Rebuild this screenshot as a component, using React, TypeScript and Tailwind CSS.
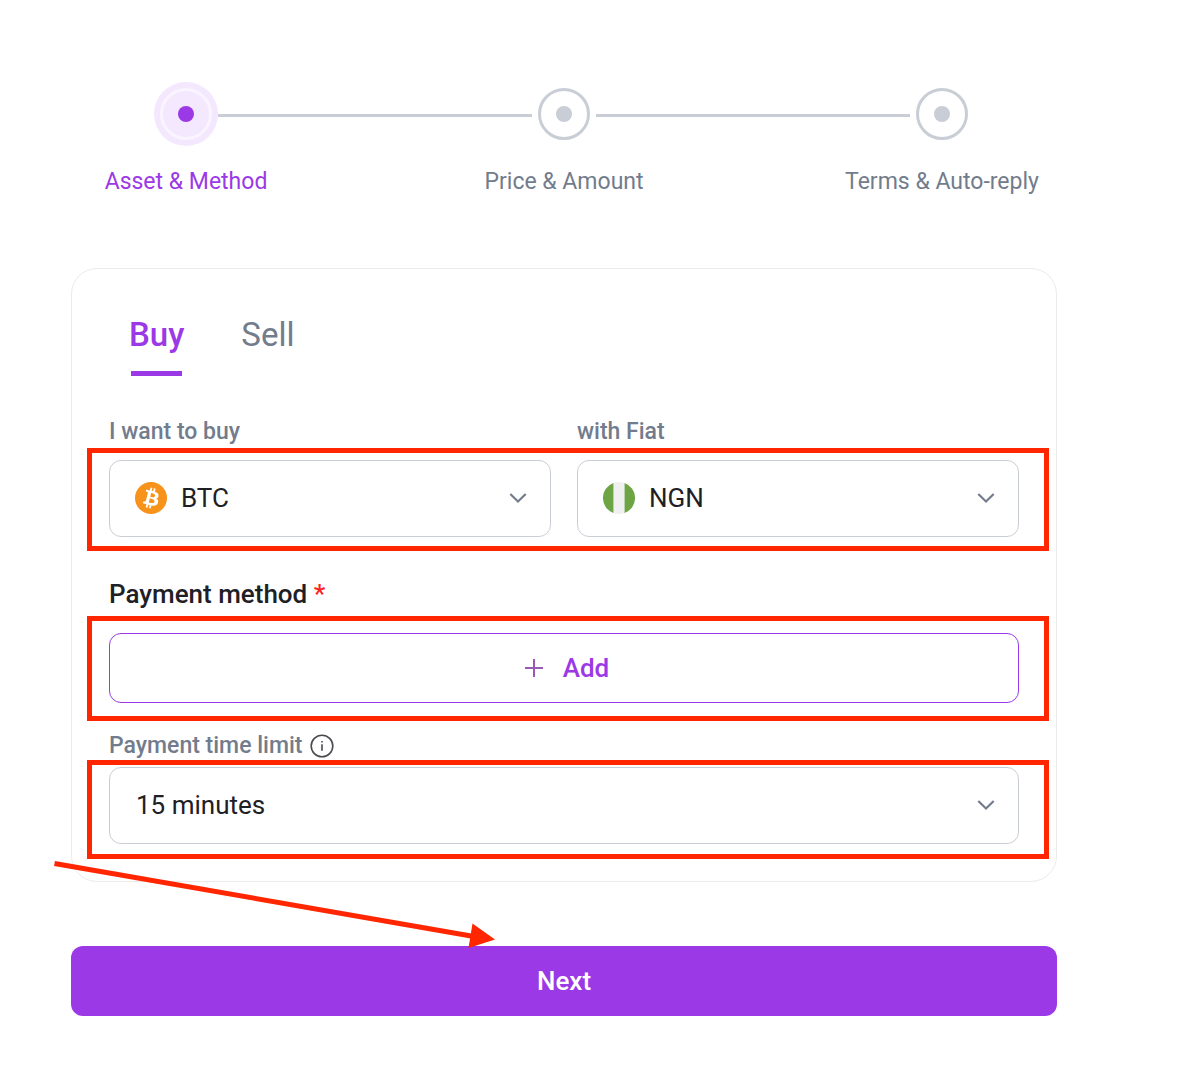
import type { ReactNode } from 'react';

const steps = ['Asset & Method', 'Price & Amount', 'Terms & Auto-reply'];

function Step({ label, active }: { label: string; active: boolean }) {
  return (
    <li className="flex w-16 flex-col items-center gap-5" aria-current={active ? 'step' : undefined}>
      <span
        className={
          active
            ? 'flex size-16 items-center justify-center rounded-full bg-[#f3e8fe]'
            : 'flex size-16 items-center justify-center rounded-full'
        }
      >
        <span
          className={
            active
              ? 'flex size-13 items-center justify-center rounded-full border-3 border-[#faf4ff]'
              : 'flex size-13 items-center justify-center rounded-full border-3 border-[#c9ced6]'
          }
        >
          <span className={active ? 'size-4 rounded-full bg-[#9b39e6]' : 'size-4 rounded-full bg-[#c9ced6]'} />
        </span>
      </span>
      <span
        className={
          active
            ? 'text-[23px] leading-8 whitespace-nowrap text-[#9b39e6]'
            : 'text-[23px] leading-8 whitespace-nowrap text-[#727c8c]'
        }
      >
        {label}
      </span>
    </li>
  );
}

function Connector() {
  return <li aria-hidden="true" className="mt-8 h-[3px] flex-1 bg-[#c9ced6]" />;
}

function Chevron() {
  return (
    <svg
      className="pointer-events-none absolute top-1/2 right-6 h-3 w-[18px] -translate-y-1/2"
      viewBox="0 0 18 12"
      fill="none"
      stroke="#727c8c"
      strokeWidth="2.2"
      aria-hidden="true"
    >
      <path d="M1.3 1 9 8.5 16.7 1" />
    </svg>
  );
}

function BitcoinIcon() {
  return (
    <svg className="size-8" viewBox="0 0 32 32" aria-hidden="true">
      <circle cx="16" cy="16" r="16" fill="#f7931a" />
      <path
        fill="#fff"
        transform="translate(-.8 -.8) scale(1.05)"
        d="M23.189 14.02c.314-2.096-1.283-3.223-3.465-3.975l.708-2.84-1.728-.43-.69 2.765c-.454-.114-.92-.22-1.385-.326l.695-2.783L15.596 6l-.708 2.839c-.376-.086-.746-.17-1.104-.26l.002-.009-2.384-.595-.46 1.846s1.283.294 1.256.312c.7.175.826.638.805 1.006l-.806 3.235c.048.012.11.03.18.057l-.183-.045-1.13 4.532c-.086.212-.303.531-.793.41.018.025-1.256-.313-1.256-.313l-.858 1.978 2.25.561c.418.105.828.215 1.231.318l-.715 2.872 1.727.43.708-2.84c.472.127.93.245 1.378.357l-.706 2.828 1.728.43.715-2.866c2.948.558 5.164.333 6.097-2.333.752-2.146-.037-3.385-1.588-4.192 1.13-.26 1.98-1.003 2.207-2.538zm-3.95 5.538c-.533 2.147-4.148.986-5.32.695l.95-3.805c1.172.293 4.929.872 4.37 3.11zm.535-5.569c-.487 1.953-3.495.96-4.47.717l.86-3.45c.975.243 4.118.696 3.61 2.733z"
      />
    </svg>
  );
}

function NigeriaIcon() {
  return (
    <svg className="size-8" viewBox="0 0 32 32" aria-hidden="true">
      <circle cx="16" cy="16" r="16" fill="#f0f0f0" />
      <path fill="#6da544" d="M10.4 1v30a16 16 0 0 1 0-30zM21.6 1v30a16 16 0 0 0 0-30z" />
    </svg>
  );
}

function SelectBox({ id, options, icon }: { id: string; options: string[]; icon?: ReactNode }) {
  return (
    <div className="relative">
      {icon && (
        <span className="pointer-events-none absolute inset-y-0 left-[26px] flex items-center pb-0.5">{icon}</span>
      )}
      <select
        id={id}
        className={
          icon
            ? 'h-[77px] w-full appearance-none rounded-xl border border-[#c9ced6] pr-12 pl-[71px] text-[26px] text-[#1e2026]'
            : 'h-[77px] w-full appearance-none rounded-xl border border-[#c9ced6] pr-12 pl-[26px] text-[26px] text-[#1e2026]'
        }
      >
        {options.map((o) => (
          <option key={o}>{o}</option>
        ))}
      </select>
      <Chevron />
    </div>
  );
}

export default function App() {
  return (
    <main className="min-h-screen bg-white pt-[82px] pr-[132px] pb-14 pl-[71px] font-['Roboto',sans-serif]">
      <ol className="flex items-start px-[83px]">
        <Step label={steps[0]} active />
        <Connector />
        <Step label={steps[1]} active={false} />
        <Connector />
        <Step label={steps[2]} active={false} />
      </ol>

      <section className="mt-[70px] rounded-[26px] border border-[#ebebeb] px-[37px] pt-[45px] pb-[37px]">
        <div role="tablist" className="flex gap-[57px] pl-5">
          <button
            role="tab"
            aria-selected="true"
            className="flex flex-col items-center gap-[15px] text-[33px] leading-[42px] font-medium text-[#9b39e6]"
          >
            Buy
            <span className="h-[5px] w-[51px] bg-[#9b39e6]" />
          </button>
          <button
            role="tab"
            aria-selected="false"
            className="flex flex-col items-center text-[33px] leading-[42px] text-[#727c8c]"
          >
            Sell
          </button>
        </div>

        <div className="mt-[42px] grid grid-cols-2 gap-x-[26px] text-[23px] leading-7 font-medium text-[#727c8c]">
          <label htmlFor="asset">I want to buy</label>
          <label htmlFor="fiat">with Fiat</label>
        </div>
        <div className="relative mt-3.5 grid grid-cols-2 gap-x-[26px]">
          <SelectBox id="asset" options={['BTC']} icon={<BitcoinIcon />} />
          <SelectBox id="fiat" options={['NGN']} icon={<NigeriaIcon />} />
          <div
            aria-hidden="true"
            className="pointer-events-none absolute -top-3 -right-[30px] -bottom-[14px] -left-[22px] border-5 border-[#ff2600]"
          />
        </div>

        <h2 className="mt-[39px] text-[26px] leading-9 font-medium text-[#1e2026]">
          Payment method <span className="text-[#ff1f26]">*</span>
        </h2>
        <div className="relative mt-[21px]">
          <button className="flex h-[70px] w-full items-center justify-center gap-5 rounded-xl border border-[#9b39e6] pl-1.5 text-[26px] font-medium text-[#9b39e6]">
            <svg className="size-[18px]" viewBox="0 0 18 18" stroke="#9b59b6" strokeWidth="2" aria-hidden="true">
              <path d="M9 0v18M0 9h18" />
            </svg>
            Add
          </button>
          <div
            aria-hidden="true"
            className="pointer-events-none absolute -top-[17px] -right-[30px] -bottom-[18px] -left-[22px] border-5 border-[#ff2600]"
          />
        </div>

        <div className="mt-[29px] flex items-center gap-2 text-[23px] leading-7 font-medium text-[#727c8c]">
          <label htmlFor="limit">Payment time limit</label>
          <svg className="size-6" viewBox="0 0 24 24" fill="none" stroke="#4a4b50" strokeWidth="1.6" aria-hidden="true">
            <circle cx="12" cy="12" r="10.8" />
            <path d="M12 10.3v6.5M12 7v1.6" />
          </svg>
        </div>
        <div className="relative mt-[7px]">
          <SelectBox id="limit" options={['15 minutes']} />
          <div
            aria-hidden="true"
            className="pointer-events-none absolute -top-[7px] -right-[30px] -bottom-[15px] -left-[22px] border-5 border-[#ff2600]"
          />
        </div>
      </section>

      <div className="relative mt-16">
        <button className="h-[70px] w-full rounded-xl bg-[#9b39e6] text-[26px] font-medium text-white">Next</button>
        <svg
          className="pointer-events-none absolute -top-[86px] -left-[17px] h-[90px] w-[444px]"
          viewBox="0 0 444 90"
          aria-hidden="true"
        >
          <path d="M0.5 3.5 420 76.5" stroke="#ff2600" strokeWidth="5" />
          <path d="M418.5 63.5 441 79.5 414.5 88Z" fill="#ff2600" />
        </svg>
      </div>
    </main>
  );
}
